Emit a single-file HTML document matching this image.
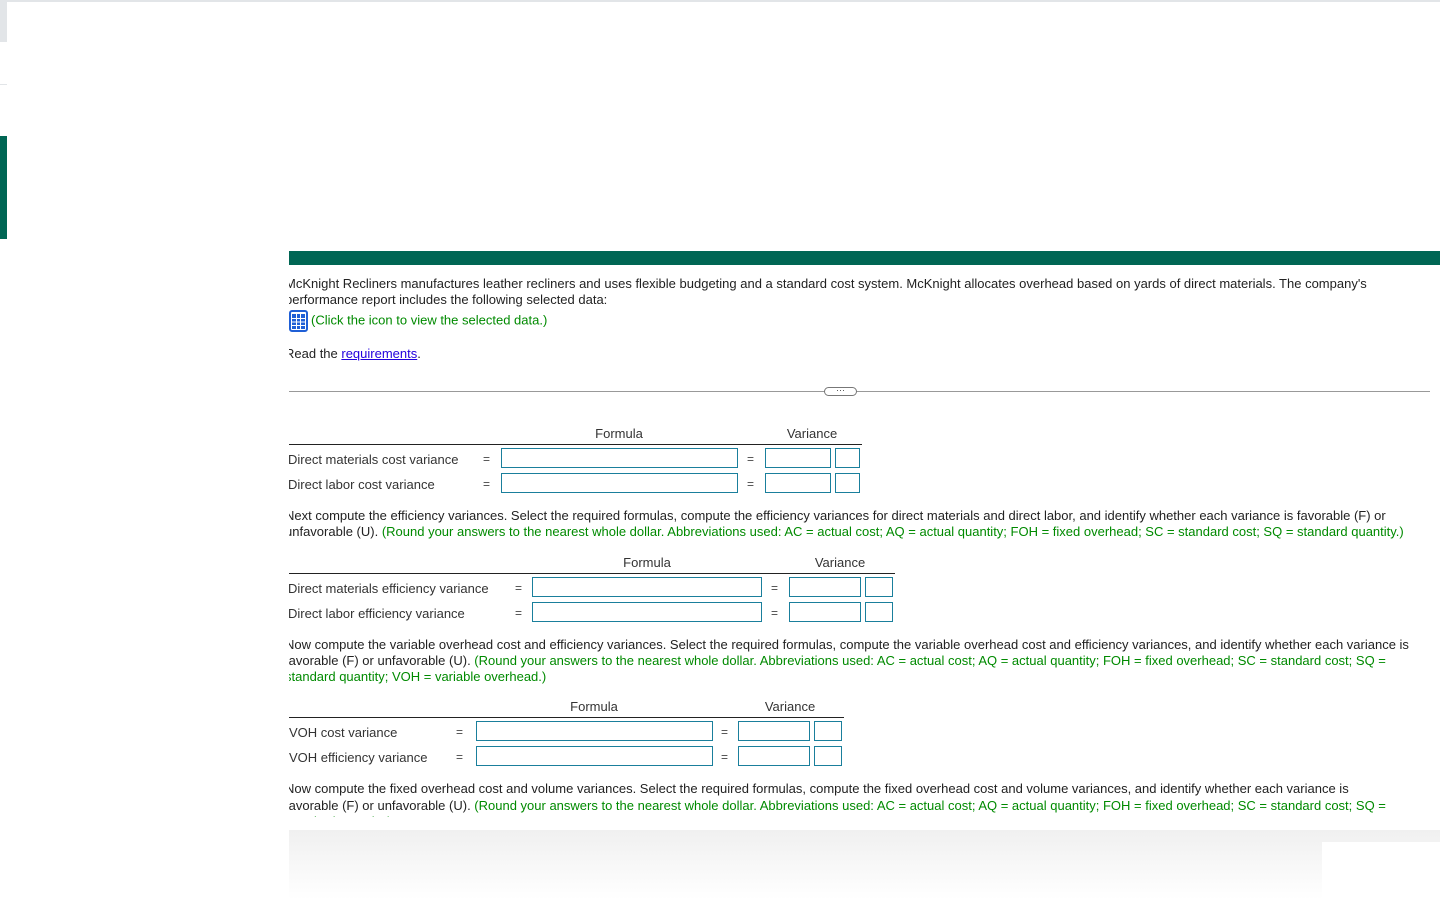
<!DOCTYPE html>
<html><head><meta charset="utf-8"><style>
*{margin:0;padding:0;box-sizing:border-box}
body{width:1440px;height:900px;position:relative;overflow:hidden;background:#fff;font-family:"Liberation Sans",Arial,sans-serif;font-size:13px;color:#222}
.a{position:absolute;white-space:nowrap}
.clip{position:absolute;left:289px;right:0;overflow:hidden}
.clip p{margin-left:-4px;line-height:16px;white-space:nowrap}
.g{color:#008a00}
.lbl{position:absolute;left:288px;color:#333;white-space:nowrap}
.eq{position:absolute;color:#444;font-size:12px}
.box{position:absolute;height:20px;border:1px solid #1a7f9c;background:#fff}
.hd{position:absolute;color:#333;transform:translateX(-50%)}
.ln{position:absolute;left:289px;height:1px;background:#222}
</style></head><body>
<div class="a" style="left:0;top:0;width:1440px;height:2px;background:#e2e5e8"></div>
<div class="a" style="left:0;top:0;width:7px;height:42px;background:#e2e5e8"></div>
<div class="a" style="left:0;top:84px;width:7px;height:1px;background:#e2e5e8"></div>
<div class="a" style="left:0;top:136px;width:7px;height:103px;background:#006654"></div>
<div class="a" style="left:289px;top:251px;width:1151px;height:14px;background:#006654"></div>

<div class="clip" style="top:276px;height:100px">
<p>McKnight Recliners manufactures leather recliners and uses flexible budgeting and a standard cost system. McKnight allocates overhead based on yards of direct materials. The company's</p>
<p>performance report includes the following selected data:</p>
<p style="margin-top:2px;margin-left:0"><svg width="20" height="22" viewBox="0 0 20 22" style="vertical-align:middle;margin-right:2px"><rect x="1" y="1" width="17" height="20" rx="2" fill="#fff" stroke="#1f5fd6" stroke-width="2"/><rect x="3" y="4" width="13" height="15" fill="#1f5fd6"/><path d="M3 8.5H16M3 12H16M3 15.5H16M7.5 4V19M11.5 4V19" stroke="#fff" stroke-width="1"/></svg><span class="g">(Click the icon to view the selected data.)</span></p>
<p style="margin-top:14px">Read the <a style="color:#2200dd;text-decoration:underline">requirements</a>.</p>
</div>

<div class="a" style="left:289px;top:391px;width:1141px;height:1px;background:#999"></div>
<div class="a" style="left:824px;top:387px;width:33px;height:9px;border:1px solid #777;border-radius:5px;background:#fff;font-size:9px;line-height:5px;text-align:center;color:#444">···</div>

<div class="hd" style="left:619px;top:426px">Formula</div>
<div class="hd" style="left:812px;top:426px">Variance</div>
<div class="ln" style="top:444px;width:573px"></div>
<div class="lbl" style="top:452px">Direct materials cost variance</div>
<div class="lbl" style="top:477px">Direct labor cost variance</div>
<div class="eq" style="left:483px;top:452px">=</div><div class="eq" style="left:483px;top:477px">=</div>
<div class="eq" style="left:747px;top:452px">=</div><div class="eq" style="left:747px;top:477px">=</div>
<div class="box" style="left:501px;top:448px;width:237px"></div><div class="box" style="left:501px;top:473px;width:237px"></div>
<div class="box" style="left:765px;top:448px;width:66px"></div><div class="box" style="left:765px;top:473px;width:66px"></div>
<div class="box" style="left:835px;top:448px;width:25px"></div><div class="box" style="left:835px;top:473px;width:25px"></div>

<div class="clip" style="top:508px;height:34px">
<p>Next compute the efficiency variances. Select the required formulas, compute the efficiency variances for direct materials and direct labor, and identify whether each variance is favorable (F) or</p>
<p>unfavorable (U). <span class="g">(Round your answers to the nearest whole dollar. Abbreviations used: AC = actual cost; AQ = actual quantity; FOH = fixed overhead; SC = standard cost; SQ = standard quantity.)</span></p>
</div>

<div class="hd" style="left:647px;top:555px">Formula</div>
<div class="hd" style="left:840px;top:555px">Variance</div>
<div class="ln" style="top:573px;width:606px"></div>
<div class="lbl" style="top:581px">Direct materials efficiency variance</div>
<div class="lbl" style="top:606px">Direct labor efficiency variance</div>
<div class="eq" style="left:515px;top:581px">=</div><div class="eq" style="left:515px;top:606px">=</div>
<div class="eq" style="left:771px;top:581px">=</div><div class="eq" style="left:771px;top:606px">=</div>
<div class="box" style="left:532px;top:577px;width:230px"></div><div class="box" style="left:532px;top:602px;width:230px"></div>
<div class="box" style="left:789px;top:577px;width:72px"></div><div class="box" style="left:789px;top:602px;width:72px"></div>
<div class="box" style="left:865px;top:577px;width:28px"></div><div class="box" style="left:865px;top:602px;width:28px"></div>

<div class="clip" style="top:637px;height:50px">
<p>Now compute the variable overhead cost and efficiency variances. Select the required formulas, compute the variable overhead cost and efficiency variances, and identify whether each variance is</p>
<p>favorable (F) or unfavorable (U). <span class="g">(Round your answers to the nearest whole dollar. Abbreviations used: AC = actual cost; AQ = actual quantity; FOH = fixed overhead; SC = standard cost; SQ =</span></p>
<p class="g">standard quantity; VOH = variable overhead.)</p>
</div>

<div class="hd" style="left:594px;top:699px">Formula</div>
<div class="hd" style="left:790px;top:699px">Variance</div>
<div class="ln" style="top:717px;width:555px"></div>
<div class="lbl" style="top:725px;left:289px">VOH cost variance</div>
<div class="lbl" style="top:750px;left:289px">VOH efficiency variance</div>
<div class="eq" style="left:456px;top:725px">=</div><div class="eq" style="left:456px;top:750px">=</div>
<div class="eq" style="left:721px;top:725px">=</div><div class="eq" style="left:721px;top:750px">=</div>
<div class="box" style="left:476px;top:721px;width:237px"></div><div class="box" style="left:476px;top:746px;width:237px"></div>
<div class="box" style="left:738px;top:721px;width:72px"></div><div class="box" style="left:738px;top:746px;width:72px"></div>
<div class="box" style="left:814px;top:721px;width:28px"></div><div class="box" style="left:814px;top:746px;width:28px"></div>

<div class="clip" style="top:781px;height:36px">
<p>Now compute the fixed overhead cost and volume variances. Select the required formulas, compute the fixed overhead cost and volume variances, and identify whether each variance is</p>
<p style="margin-top:1px">favorable (F) or unfavorable (U). <span class="g">(Round your answers to the nearest whole dollar. Abbreviations used: AC = actual cost; AQ = actual quantity; FOH = fixed overhead; SC = standard cost; SQ =</span></p>
<p class="g">standard quantity.)</p>
</div>

<div class="a" style="left:289px;top:830px;width:1151px;height:70px;background:linear-gradient(#f0f0f0,#fff)"></div>
<div class="a" style="left:1322px;top:842px;width:118px;height:58px;background:#fff"></div>
</body></html>
